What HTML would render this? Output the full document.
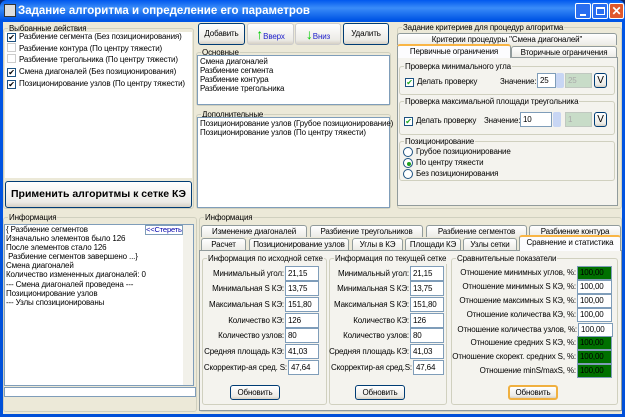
<!DOCTYPE html>
<html><head><meta charset="utf-8"><style>
*{box-sizing:border-box;margin:0;padding:0}
body{width:625px;height:417px;overflow:hidden;background:#0a246a;font-family:"Liberation Sans",sans-serif;font-size:8px;letter-spacing:-0.15px;color:#000;position:relative}
.a{position:absolute}
#win{left:0;top:0;width:625px;height:417px;background:linear-gradient(#0058ee,#3a8cf8 8px,#0055e5 20px,#0050d8);border-radius:7px 7px 0 0}
#client{left:3px;top:22px;width:619px;height:392px;background:#ece9d8}
.t{white-space:nowrap;line-height:11px}
.g{position:absolute;border:1px solid #d0d0bf;border-radius:3px}
.gl{position:absolute;top:-6px;left:4px;background:#ece9d8;padding:0 1px;white-space:nowrap;line-height:11px}
.w{position:absolute;background:#fff;border:1px solid #7f9db9}
.in{position:absolute;background:#fff;border:1px solid #7f9db9;height:15px;padding-left:2px;line-height:13px}
.gr{background:#007000}
.btn{position:absolute;border:1px solid #003c74;border-radius:3px;background:linear-gradient(#fff,#ecebe6 80%,#d6d0c5);text-align:center;white-space:nowrap}
.tab{position:absolute;border:1px solid #919b9c;border-bottom:none;border-radius:3px 3px 0 0;background:linear-gradient(#fff,#ecebe6);text-align:center;line-height:11px;white-space:nowrap}
.cb{display:inline-block;width:9px;height:9px;border:1px solid #1c5180;background:#fff;vertical-align:-1px;margin-right:3px;font-size:8px;line-height:7px;text-align:center;color:#000}
.rd{position:absolute;width:10px;height:10px;border:1px solid #1c5180;border-radius:50%;background:#fff}
.lab{position:absolute;text-align:right;white-space:nowrap;line-height:11px}
</style></head><body>
<div id="win" class="a"></div>
<div class="a" style="left:4px;top:4px;width:12px;height:13px;background:#ddd;border:1px solid #333"></div>
<div class="a t" style="left:18px;top:4px;color:#fff;font-weight:bold;font-size:11.5px;line-height:14px;letter-spacing:0">Задание алгоритма и определение его параметров</div>
<div class="a" style="left:575px;top:3px;width:16px;height:16px;background:#2a6ef0;border:1px solid #fff;border-radius:2px"><div class="a" style="left:4px;top:10px;width:6px;height:2px;background:#fff"></div></div>
<div class="a" style="left:592px;top:3px;width:16px;height:16px;background:#2a6ef0;border:1px solid #fff;border-radius:2px"><div class="a" style="left:3px;top:3px;width:9px;height:8px;border:1px solid #fff;border-top-width:2px"></div></div>
<div class="a" style="left:609px;top:3px;width:15px;height:16px;background:#e0582c;border:1px solid #fff;border-radius:2px;color:#fff;font-weight:bold;font-size:12px;line-height:14px;text-align:center">✕</div>
<div id="client" class="a"></div>

<!-- left top -->
<div class="g" style="left:3px;top:28px;width:191px;height:181px"><span class="gl">Выбранные действия</span></div>
<div class="w" style="left:4px;top:31px;width:189px;height:148px;border-color:#ece9d8"></div>
<div class="a t" style="left:7px;top:31px;line-height:11.7px">
<div><span class="cb">✔</span>Разбиение сегмента (Без позиционирования)</div>
<div><span class="cb" style="border-color:#ccc"></span>Разбиение контура (По центру тяжести)</div>
<div><span class="cb" style="border-color:#ccc"></span>Разбиение трегольника (По центру тяжести)</div>
<div><span class="cb">✔</span>Смена диагоналей (Без позиционирования)</div>
<div><span class="cb">✔</span>Позиционирование узлов (По центру тяжести)</div></div>
<div class="btn" style="left:5px;top:181px;width:187px;height:27px;line-height:25px;font-weight:bold;font-size:10.5px;letter-spacing:0">Применить алгоритмы к сетке КЭ</div>

<!-- middle -->
<div class="btn" style="left:198px;top:23px;width:47px;height:22px;line-height:20px">Добавить</div>
<div class="btn" style="left:247px;top:23px;width:47px;height:22px;line-height:20px;border-color:#ccc;color:#22c">
<span style="color:#0c0;font-size:14px;font-weight:bold">↑</span>Вверх</div>
<div class="btn" style="left:295px;top:23px;width:46px;height:22px;line-height:20px;border-color:#ccc;color:#22c">
<span style="color:#0c0;font-size:14px;font-weight:bold">↓</span>Вниз</div>
<div class="btn" style="left:343px;top:23px;width:46px;height:22px;line-height:20px">Удалить</div>
<div class="g" style="left:196px;top:52px;width:195px;height:54px"><span class="gl">Основные</span></div>
<div class="w" style="left:197px;top:55px;width:193px;height:50px"></div>
<div class="a t" style="left:200px;top:57px;line-height:9px">Смена диагоналей<br>Разбиение сегмента<br>Разбиение контура<br>Разбиение трегольника</div>
<div class="g" style="left:196px;top:114px;width:195px;height:95px"><span class="gl">Дополнительные</span></div>
<div class="w" style="left:197px;top:117px;width:193px;height:91px"></div>
<div class="a t" style="left:200px;top:119px;line-height:9px">Позиционирование узлов (Грубое позиционирование)<br>Позиционирование узлов (По центру тяжести)</div>

<!-- right top -->
<div class="g" style="left:397px;top:27px;width:225px;height:182px"><span class="gl">Задание критериев для процедур алгоритма</span></div>
<div class="tab" style="left:397px;top:33px;width:220px;height:12px">Критерии процедуры "Смена диагоналей"</div>
<div class="tab" style="left:397px;top:44px;width:114px;height:14px;background:#fcfcfe;border-top:2px solid #f9b545;z-index:2">Первичные ограничения</div>
<div class="tab" style="left:511px;top:46px;width:106px;height:11px">Вторичные ограничения</div>
<div class="a" style="left:397px;top:57px;width:221px;height:149px;border:1px solid #919b9c;background:#f4f3ee"></div>
<div class="g" style="left:399px;top:66px;width:216px;height:29px"><span class="gl" style="background:#f4f3ee">Проверка минимального угла</span></div>
<div class="a t" style="left:405px;top:76px"><span class="cb" style="color:#2a2">✔</span>Делать проверку</div>
<div class="a t" style="left:500px;top:76px">Значение:</div>
<div class="in" style="left:537px;top:73px;width:19px">25</div>
<div class="a" style="left:556px;top:73px;width:8px;height:15px;background:#c8d6f4;border-radius:2px"></div>
<div class="in" style="left:565px;top:73px;width:27px;background:#c8dcc8;color:#aaa;border-color:#c0c8c0">25</div>
<div class="btn" style="left:594px;top:73px;width:13px;height:15px;line-height:13px;font-size:10px">V</div>
<div class="g" style="left:399px;top:101px;width:216px;height:34px"><span class="gl" style="background:#f4f3ee">Проверка максимальной площади треугольника</span></div>
<div class="a t" style="left:404px;top:115px"><span class="cb" style="color:#2a2">✔</span>Делать проверку</div>
<div class="a t" style="left:484px;top:115px">Значение:</div>
<div class="in" style="left:520px;top:112px;width:32px">10</div>
<div class="a" style="left:553px;top:112px;width:8px;height:15px;background:#c8d6f4;border-radius:2px"></div>
<div class="in" style="left:565px;top:112px;width:27px;background:#c8dcc8;color:#aaa;border-color:#c0c8c0">1</div>
<div class="btn" style="left:594px;top:112px;width:13px;height:15px;line-height:13px;font-size:10px">V</div>
<div class="g" style="left:399px;top:141px;width:216px;height:40px"><span class="gl" style="background:#f4f3ee">Позиционирование</span></div>
<div class="rd" style="left:403px;top:147px"></div><div class="a t" style="left:416px;top:146px">Грубое позиционирование</div>
<div class="rd" style="left:403px;top:158px"><div class="a" style="left:3px;top:3px;width:4px;height:4px;border-radius:50%;background:#21a121"></div></div><div class="a t" style="left:416px;top:157px">По центру тяжести</div>
<div class="rd" style="left:403px;top:169px"></div><div class="a t" style="left:416px;top:168px">Без позиционирования</div>

<!-- bottom left -->
<div class="g" style="left:3px;top:217px;width:194px;height:195px"><span class="gl">Информация</span></div>
<div class="w" style="left:4px;top:224px;width:190px;height:162px"></div>
<div class="a" style="left:183px;top:225px;width:10px;height:160px;background:#f2f1ea"></div>
<div class="a t" style="left:6px;top:225px;line-height:9.1px">{ Разбиение сегментов<br>Изначально элементов было 126<br>После элементов стало 126<br>&nbsp;Разбиение сегментов завершено ...}<br>Смена диагоналей<br>Количество измененных диагоналей: 0<br>--- Смена диагоналей проведена ---<br>Позиционирование узлов<br>--- Узлы спозиционированы</div>
<div class="a t" style="left:145px;top:225px;width:38px;height:10px;border:1px solid #7f9db9;line-height:8px;color:#00a;font-size:7.5px;background:#fff">&lt;&lt;Стереть</div>
<div class="w" style="left:4px;top:387px;width:192px;height:10px"></div>

<!-- bottom right -->
<div class="g" style="left:199px;top:217px;width:423px;height:195px"><span class="gl">Информация</span></div>
<div class="tab" style="left:201px;top:225px;width:106px;height:12px">Изменение диагоналей</div>
<div class="tab" style="left:310px;top:225px;width:113px;height:12px">Разбиение треугольников</div>
<div class="tab" style="left:426px;top:225px;width:101px;height:12px">Разбиение сегментов</div>
<div class="tab" style="left:529px;top:225px;width:92px;height:12px">Разбиение контура</div>
<div class="tab" style="left:201px;top:238px;width:45px;height:12px">Расчет</div>
<div class="tab" style="left:249px;top:238px;width:100px;height:12px">Позиционирование узлов</div>
<div class="tab" style="left:352px;top:238px;width:51px;height:12px">Углы в КЭ</div>
<div class="tab" style="left:405px;top:238px;width:56px;height:12px">Площади КЭ</div>
<div class="tab" style="left:463px;top:238px;width:54px;height:12px">Узлы сетки</div>
<div class="tab" style="left:519px;top:235px;width:102px;height:16px;background:#fcfcfe;border-top:2px solid #f9b545;z-index:2">Сравнение и статистика</div>
<div class="a" style="left:199px;top:250px;width:423px;height:161px;border:1px solid #919b9c;background:#f4f3ee"></div>
<div class="g" style="left:202px;top:258px;width:125px;height:147px"><span class="gl" style="background:#f4f3ee">Информация по исходной сетке</span></div>
<div class="g" style="left:329px;top:258px;width:118px;height:147px"><span class="gl" style="background:#f4f3ee">Информация по текущей сетке</span></div>
<div class="g" style="left:451px;top:258px;width:167px;height:147px"><span class="gl" style="background:#f4f3ee">Сравнительные показатели</span></div>

<!-- left col -->
<div class="lab" style="right:341px;top:268px">Минимальный угол:</div><div class="in" style="left:285px;top:266px;width:34px">21,15</div>
<div class="lab" style="right:341px;top:283px">Минимальная S КЭ:</div><div class="in" style="left:285px;top:281px;width:34px">13,75</div>
<div class="lab" style="right:341px;top:299px">Максимальная S КЭ:</div><div class="in" style="left:285px;top:297px;width:34px">151,80</div>
<div class="lab" style="right:341px;top:315px">Количество КЭ:</div><div class="in" style="left:285px;top:313px;width:34px">126</div>
<div class="lab" style="right:341px;top:330px">Количество узлов:</div><div class="in" style="left:285px;top:328px;width:34px">80</div>
<div class="lab" style="right:341px;top:346px">Средняя площадь КЭ:</div><div class="in" style="left:285px;top:344px;width:34px">41,03</div>
<div class="lab" style="right:338px;top:362px">Скорректир-ая сред. S:</div><div class="in" style="left:288px;top:360px;width:31px">47,64</div>
<div class="btn" style="left:230px;top:385px;width:50px;height:15px;line-height:13px">Обновить</div>
<!-- mid col -->
<div class="lab" style="right:216px;top:268px">Минимальный угол:</div><div class="in" style="left:410px;top:266px;width:34px">21,15</div>
<div class="lab" style="right:216px;top:283px">Минимальная S КЭ:</div><div class="in" style="left:410px;top:281px;width:34px">13,75</div>
<div class="lab" style="right:216px;top:299px">Максимальная S КЭ:</div><div class="in" style="left:410px;top:297px;width:34px">151,80</div>
<div class="lab" style="right:216px;top:315px">Количество КЭ:</div><div class="in" style="left:410px;top:313px;width:34px">126</div>
<div class="lab" style="right:216px;top:330px">Количество узлов:</div><div class="in" style="left:410px;top:328px;width:34px">80</div>
<div class="lab" style="right:216px;top:346px">Средняя площадь КЭ:</div><div class="in" style="left:410px;top:344px;width:34px">41,03</div>
<div class="lab" style="right:213px;top:362px">Скорректир-ая сред.S:</div><div class="in" style="left:413px;top:360px;width:31px">47,64</div>
<div class="btn" style="left:355px;top:385px;width:50px;height:15px;line-height:13px">Обновить</div>
<!-- right col -->
<div class="lab" style="right:49px;top:267px">Отношение минимных углов, %:</div><div class="in gr" style="left:577px;top:266px;width:35px;height:14px;line-height:12px">100,00</div>
<div class="lab" style="right:49px;top:281px">Отношение минимных S КЭ, %:</div><div class="in" style="left:577px;top:280px;width:35px;height:14px;line-height:12px">100,00</div>
<div class="lab" style="right:49px;top:295px">Отношение максимных S КЭ, %:</div><div class="in" style="left:577px;top:294px;width:35px;height:14px;line-height:12px">100,00</div>
<div class="lab" style="right:49px;top:309px">Отношение количества КЭ, %:</div><div class="in" style="left:577px;top:308px;width:35px;height:14px;line-height:12px">100,00</div>
<div class="lab" style="right:48px;top:324px">Отношение количества узлов, %:</div><div class="in" style="left:578px;top:323px;width:35px;height:14px;line-height:12px">100,00</div>
<div class="lab" style="right:49px;top:337px">Отношение средних S КЭ, %:</div><div class="in gr" style="left:577px;top:336px;width:35px;height:14px;line-height:12px">100,00</div>
<div class="lab" style="right:49px;top:351px">Отношение скорект. средних S, %:</div><div class="in gr" style="left:577px;top:350px;width:35px;height:14px;line-height:12px">100,00</div>
<div class="lab" style="right:49px;top:365px">Отношение minS/maxS, %:</div><div class="in gr" style="left:577px;top:364px;width:35px;height:14px;line-height:12px">100,00</div>
<div class="btn" style="left:508px;top:385px;width:50px;height:15px;line-height:12px;border:2px solid #f0b040">Обновить</div>
</body></html>
